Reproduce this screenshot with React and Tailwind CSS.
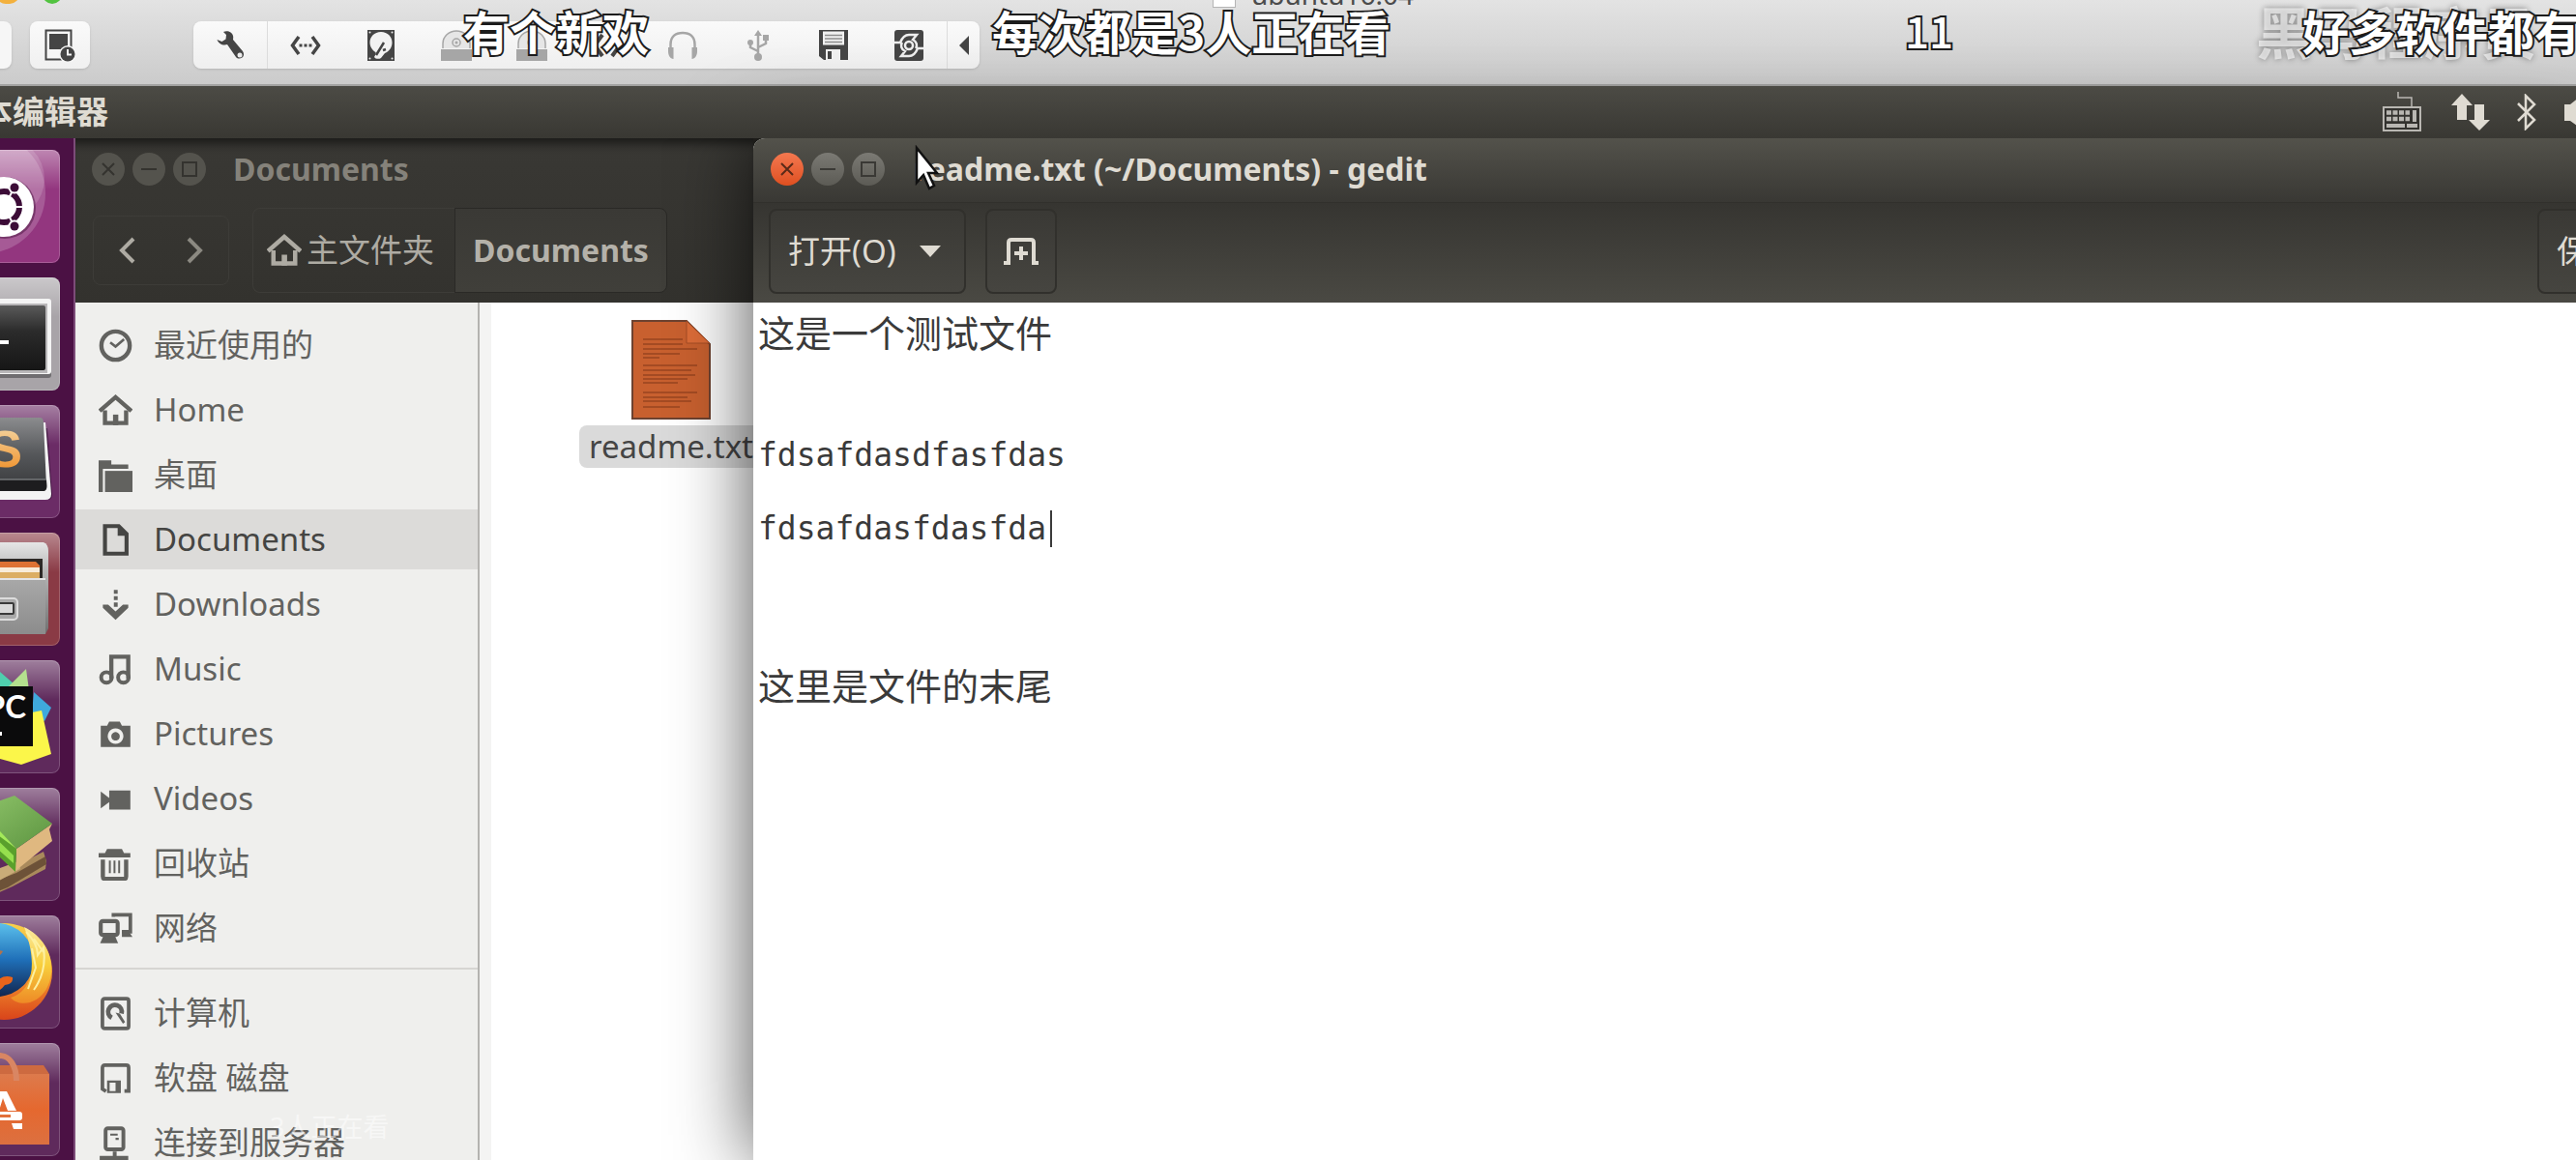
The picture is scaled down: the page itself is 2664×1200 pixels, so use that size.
import React from 'react';
import clsx from 'clsx';

const uiFont = 'font-["Noto_Sans","Noto_Sans_CJK_SC",sans-serif]';

/* ---------- VM toolbar icons (32x32) ---------- */

const vmIcons = {
  wrench: (
    <>
      <path d="M9 2c4-2 9 0 10 4 .5 2 0 3 0 4l10 12c1.500 2 1.500 5-.5 6.500s-5 1.500-6.500-.5L13 15c-4 1.500-9-.5-10.500-5l5 2 4-2.500L12 5z" />
      <circle cx="26" cy="26" r="2.500" fill="#ededed" />
    </>
  ),
  code: (
    <>
      <path d="M9 7 2.500 16 9 25M23 7l6.500 9L23 25" fill="none" stroke="currentColor" strokeWidth="3.500" />
      <path d="M9.500 14.500h3v3h-3zM14.500 14.500h3v3h-3zM19.500 14.500h3v3h-3z" />
    </>
  ),
  disk: (
    <>
      <path d="M2 0h28v32H2z" />
      <path d="M16 2c7 0 11.500 5 11.500 11 0 5-3 9-7.500 11l-4 5c-2 1.500-6 1-7-1 1-2 2-3 1.500-5C7 21 4.500 17 4.500 13 4.500 7 9 2 16 2z" fill="#f2f2f2" />
      <path d="m11 26 8-13M18 21l3-1" stroke="currentColor" strokeWidth="2.500" fill="none" />
      <circle cx="4.500" cy="29.500" r="1" fill="#eee" />
      <circle cx="27.500" cy="29.500" r="1" fill="#eee" />
      <circle cx="4.500" cy="2.500" r="1" fill="#eee" />
      <circle cx="27.500" cy="2.500" r="1" fill="#eee" />
    </>
  ),
  cd: (
    <>
      <path d="M2 19V14a14 13 0 0 1 28 0v5" fill="#e6e6e6" stroke="currentColor" strokeWidth="1.500" />
      <circle cx="16" cy="13" r="4" fill="none" stroke="currentColor" strokeWidth="1.500" />
      <circle cx="16" cy="13" r="1.500" />
      <path d="M0 20h32v12H0z" />
    </>
  ),
  network: (
    <>
      <path d="M11 5 3 16l8 11M21 5l8 11-8 11" fill="none" stroke="currentColor" strokeWidth="4" />
      <path d="M14 15h4v3h-4z" />
    </>
  ),
  headphones: (
    <>
      <path d="M3.500 22v-7c0-8 5-12 12.500-12s12.500 4 12.500 12v7" fill="none" stroke="currentColor" strokeWidth="2.500" />
      <path d="M1 18h5.500v12C3 30 1 26 1 22zM31 18h-5.500v12C29 30 31 26 31 22z" />
    </>
  ),
  usb: (
    <>
      <path d="M16 4v24M16 22l-8-4v-5M16 18l8-4V9" fill="none" stroke="currentColor" strokeWidth="2.500" />
      <path d="m16 0 4 6h-8z" />
      <circle cx="16" cy="28" r="4" />
      <circle cx="8" cy="13" r="3" />
      <path d="M21 5h6v6h-6z" />
    </>
  ),
  floppy: (
    <>
      <path d="M1 0h30v31H6l-5-4z" />
      <path d="M5 1.500h22v14H5z" fill="#f0f0f0" />
      <path d="M7 5.500h18M7 9h18M7 12.500h18" stroke="#8c8c8c" strokeWidth="1.500" />
      <path d="M8 20h15v11H8z" fill="#f0f0f0" />
      <path d="M10 22h4v8h-4z" />
    </>
  ),
  sync: (
    <>
      <rect x="1" y="0" width="30" height="32" rx="3" />
      <path d="M1 13h6c2-5 5-8 9-8h8l-4 5c4 2 5 6 3 9M31 19h-6c-2 5-5 8-9 8H8l4-5c-4-2-5-6-3-9" fill="none" stroke="#eee" strokeWidth="2.500" />
      <circle cx="16" cy="16" r="4" fill="none" stroke="#eee" strokeWidth="2.500" />
    </>
  ),
};

const vmButtons = [
  { id: 'code', label: 'Code' },
  { id: 'disk', label: 'Hard disk' },
  { id: 'cd', label: 'CD 1', dim: true },
  { id: 'cd', label: 'CD 2', dim: true },
  { id: 'network', label: 'Network' },
  { id: 'headphones', label: 'Sound', dim: true },
  { id: 'usb', label: 'USB', dim: true },
  { id: 'floppy', label: 'Floppy' },
  { id: 'sync', label: 'Sync' },
];

function VmIcon({ id, dim }) {
  return (
    <svg viewBox="0 0 32 32" className={clsx('h-8 w-8', dim ? 'text-[#a6a6a6]' : 'text-[#454545]')} fill="currentColor">
      {vmIcons[id]}
    </svg>
  );
}

function VmToolbar() {
  return (
    <header className="h-[89px] shrink-0 border-b-2 border-[#a3a3a2] bg-linear-to-b from-[#e3e3e3] to-[#cbcbcb]">
      {/* Title row, mostly above the visible area */}
      <div className="flex h-2 items-end overflow-hidden">
        <div className="-ml-1 flex w-17 shrink-0 gap-6 pb-1">
          <span className="h-5 w-6 shrink-0 rounded-full bg-[#f3b13e]" />
          <span className="h-5 w-5 shrink-0 rounded-full bg-[#52c340]" />
        </div>
        <div className="flex flex-1 items-end justify-center gap-4 pr-3">
          <span className="h-8 w-6 border border-[#b5b5b5] bg-white" />
          <span className="text-[28px] leading-7 text-[#4c4c4c]">ubuntu16.04</span>
        </div>
      </div>

      <div className="-ml-[50px] mt-[14px] flex h-[49px]">
        <button type="button" aria-label="Pause" className="w-[62px] rounded-lg bg-[#f6f6f6] shadow-sm" />
        <button type="button" aria-label="Snapshot" className="ml-[19px] flex w-[62px] items-center justify-center rounded-lg bg-linear-to-b from-[#fafafa] to-[#f0f0f0] shadow-sm">
          <svg viewBox="0 0 32 34" className="h-[34px] w-8" fill="#454545">
            <path d="M1.500 1.500h26v30h-26z" fill="#f5f5f5" stroke="#454545" strokeWidth="2" />
            <path d="M5 5h19v16H5z" />
            <circle cx="24" cy="26" r="9" fill="#f5f5f5" />
            <circle cx="24" cy="26" r="7.500" />
            <path d="M24 21v5.500h4" fill="none" stroke="#f5f5f5" strokeWidth="2" />
          </svg>
        </button>
        <div className="ml-[107px] flex rounded-lg bg-linear-to-b from-[#fafafa] to-[#efefef] shadow-sm">
          <button type="button" aria-label="Settings" className="flex w-[77px] items-center justify-center border-r border-[#dcdcdc]">
            <VmIcon id="wrench" />
          </button>
          {vmButtons.map((b) => (
            <button key={b.label} type="button" aria-label={b.label} className="flex w-[78px] items-center justify-center">
              <VmIcon id={b.id} dim={b.dim} />
            </button>
          ))}
          <button type="button" aria-label="Collapse" className="flex w-[34px] items-center justify-center border-l border-[#dcdcdc]">
            <svg viewBox="0 0 10 20" className="h-5 w-[10px]" fill="#454545">
              <path d="M10 0v20L0 10z" />
            </svg>
          </button>
        </div>
      </div>
    </header>
  );
}

/* ---------- Ubuntu top panel ---------- */

function TopPanel() {
  return (
    <div className="relative z-20 flex h-[54px] shrink-0 items-center justify-between bg-linear-to-b from-[#4c4b45] to-[#393833]">
      <div className="flex w-28 justify-end overflow-hidden">
        <span className="shrink-0 text-[33px] font-bold leading-[54px] text-[#dfdbd2]">文本编辑器</span>
      </div>
      <div className="-mr-5 flex items-center text-[#dfdbd2]">
        <svg viewBox="0 0 42 42" className="mr-[30px] h-[42px] w-[42px] text-[#b9b7b2]" fill="none" stroke="currentColor">
          <path d="M17 0v6h14v9" strokeWidth="1.500" />
          <path d="M2 16h38v24H2z" strokeWidth="2" fill="#33322e" />
          <path d="M5 21.500h24M5 28h24" strokeWidth="4.500" strokeDasharray="5 1.500" />
          <path d="M34 19v12" strokeWidth="4" />
          <path d="M5 35h19M26 35h11" strokeWidth="4" />
        </svg>
        <svg viewBox="0 0 40 38" className="mr-7 h-[38px] w-10" fill="currentColor">
          <path d="M11 0 22 12h-6v15H6V12H0zM29 38 18 27h6V11h10v16h6z" />
        </svg>
        <svg viewBox="0 0 20 38" className="mr-[29px] h-[38px] w-5" fill="none" stroke="currentColor" strokeWidth="2.500">
          <path d="M1 10l17 17-9 9V2l9 9L1 28" />
        </svg>
        <svg viewBox="0 0 32 40" className="h-10 w-8" fill="currentColor">
          <path d="M0 12h6L20 1v38L6 29H0z" />
        </svg>
      </div>
    </div>
  );
}

/* ---------- Launcher tiles (117x117) ---------- */

const launcherTiles = [
  {
    id: 'dash',
    bg: '#93367f',
    art: (
      <>
        <circle cx="40" cy="45" r="62" fill="#fff" opacity=".18" />
        <circle cx="59" cy="30" r="42" fill="#fff" opacity=".15" />
        <circle cx="60" cy="60" r="32" fill="#4a1440" opacity=".5" />
        <circle cx="59" cy="59" r="31" fill="#fff" />
        <circle cx="59" cy="59" r="16" fill="none" stroke="#3c0c37" strokeWidth="6" />
        <path d="M59 59 71 37M59 59l12 22M59 59h24" stroke="#fff" strokeWidth="2" />
        <circle cx="59" cy="59" r="12" fill="#fff" />
        <circle cx="70" cy="39" r="6.500" fill="#fff" />
        <circle cx="70" cy="79" r="6.500" fill="#fff" />
        <circle cx="70" cy="39" r="4.500" fill="#3c0c37" />
        <circle cx="70" cy="79" r="4.500" fill="#3c0c37" />
      </>
    ),
  },
  {
    id: 'terminal',
    bg: '#a8a4a8',
    art: (
      <>
        <rect x="6" y="24" width="102" height="80" rx="3" fill="#6f6d70" />
        <rect x="6" y="22" width="102" height="78" rx="3" fill="#f4f4f4" />
        <rect x="10" y="27" width="94" height="72" fill="#b9b7b9" />
        <rect x="12" y="29" width="90" height="67" rx="2" fill="url(#dark)" />
        <path d="M50 67h14" stroke="#fff" strokeWidth="4" />
      </>
    ),
  },
  {
    id: 'sublime',
    bg: '#6b2c66',
    art: (
      <>
        <path d="M12 24h92l5 69q0 5-5 5H10z" fill="#2f1030" opacity=".6" />
        <path d="M12 18h90l6 74q0 6-6 6H10z" fill="#f3f3f3" />
        <path d="M12 13h84q4 0 4 5l3 66q0 5-4 5H8z" fill="url(#slate)" />
        <path d="M8 77h95l.5 7q0 5-4 5H8z" fill="#1d1d1f" />
        <path d="M8 77h95" stroke="#75777a" strokeWidth="1.500" />
        <text x="78" y="64" textAnchor="end" fontSize="54" fontWeight="700" fill="url(#orange)" className='font-["Liberation_Sans",sans-serif]'>S</text>
      </>
    ),
  },
  {
    id: 'files',
    bg: '#8a3a45',
    art: (
      <>
        <path d="M8 16q0-6 6-6h86q5 2 5 9v80l-3 6H8z" fill="url(#silver)" />
        <path d="M8 27h91v20H8z" fill="#2e2926" />
        <path d="M8 30h84l4 4v13H8z" fill="#dd7233" />
        <path d="M8 36h88v11H8z" fill="#f8ecd8" />
        <path d="M8 41h88v7H8z" fill="#dcae62" />
        <path d="M6 49q0-2 2-2h94v58H6z" fill="url(#drawer)" />
        <path d="M6 48h96" stroke="#e4e4e4" strokeWidth="2" />
        <rect x="40" y="68" width="33" height="22" rx="4" fill="#a8a8a8" stroke="#dcdcdc" strokeWidth="2" />
        <rect x="44" y="73" width="25" height="11" rx="1" fill="#d9d9d9" stroke="#3a3a3a" strokeWidth="2" />
      </>
    ),
  },
  {
    id: 'pycharm',
    bg: '#5f2a5c',
    art: (
      <>
        <path d="m16 45 24-40 15 7 15 13-4 8z" fill="#4fcfae" />
        <path d="m64 27 18-18 3 22H62z" fill="#b4e08e" />
        <path d="m90 33 18 16-7 14-13-8z" fill="#3fa9dc" />
        <path d="M14 86 88 54l10-2 10 45-31 11-22-6z" fill="#fbf64a" />
        <path d="M24 27h65v62H24z" fill="#0b0b0c" />
        <text x="82" y="60" textAnchor="end" fontSize="33" fontWeight="700" fill="#fff" className='font-["Lato",sans-serif]'>PC</text>
        <path d="M32 76h25" stroke="#fff" strokeWidth="4" />
      </>
    ),
  },
  {
    id: 'books',
    bg: '#5f2a5c',
    art: (
      <>
        <path d="M20 96 72 80l28-14 3 10-1 8-34 18-30 13z" fill="#a98a5c" />
        <path d="M30 104 72 88l30-17 1 8-40 24-30 12z" fill="#6d5238" />
        <path d="m30 92 44-16 2 8-44 24z" fill="#c9ac78" />
        <path d="m72 63 37-26-3 6 3 12-38 31z" fill="#dfb880" />
        <path d="M30 22 70 8l39 29-37 26z" fill="url(#cover)" />
        <path d="m30 22 25 23 17 18-2 10-40-30z" fill="#a4ea5a" />
        <path d="m30 32 42 31-1 24-16-15-25-22z" fill="#5aa02c" />
        <path d="m40 42 29 28v8L40 52z" fill="#96e04e" />
      </>
    ),
  },
  {
    id: 'firefox',
    bg: '#5f2a5c',
    art: (
      <>
        <circle cx="59" cy="58" r="50" fill="url(#flame)" />
        <circle cx="52" cy="46" r="38" fill="url(#globe)" />
        <path d="M80 12c20 10 30 28 28 48-2 16-10 26-22 30-8 2-16 0-20-5 20-6 30-30 14-73z" fill="url(#tail)" />
        <path d="M82 17c8 8 12 16 12 24l6-8c2 14 0 30-10 44M90 24l10 14M88 34l4 20-8 22" stroke="#fdf0a0" strokeWidth="2" fill="none" />
        <path d="M20 66q24 8 34 0 6-5 14-2 1 7-8 8-6 8-16 9-16 0-24-15z" fill="#e8641b" />
        <path d="M44 40q6-6 14-3-2 5-10 8z" fill="#b0724e" />
      </>
    ),
  },
  {
    id: 'software',
    bg: '#5f2a5c',
    art: (
      <>
        <path d="M8 23h92l6 9v73H8z" fill="#cd6a40" />
        <path d="M8 32h98v73H8z" fill="url(#bag)" />
        <path d="M41 36c0-32 31-30 31 3" fill="none" stroke="#d98663" strokeWidth="6" />
        <path d="m45 70 8-20h9l10 20h-9l-5-13-4 13z" fill="#fff" />
        <rect x="38" y="71" width="40" height="9" rx="3" fill="#fff" />
        <path d="M42 75.500h24" stroke="#e2703a" strokeWidth="3" />
        <path d="M38 83h10v6H38zM67 83h11v6H69z" fill="#fff" />
      </>
    ),
  },
];

function Launcher() {
  return (
    <nav className="flex w-[78px] shrink-0 flex-col items-end gap-[15px] overflow-hidden border-r-2 border-[#7c4c78] bg-[#4b1144] pr-[14px] pt-3">
      <svg className="absolute h-0 w-0">
        <defs>
          <linearGradient id="dark" x2="0" y2="1"><stop stopColor="#5a5a5a" /><stop offset=".4" stopColor="#2b2b2b" /><stop offset="1" stopColor="#161616" /></linearGradient>
          <linearGradient id="slate" x2="0" y2="1"><stop stopColor="#8b8c8e" /><stop offset=".5" stopColor="#55575a" /><stop offset="1" stopColor="#37383a" /></linearGradient>
          <linearGradient id="silver" x2="0" y2="1"><stop stopColor="#e6e6e6" /><stop offset=".3" stopColor="#b9b9b9" /><stop offset="1" stopColor="#6f6f6f" /></linearGradient>
          <linearGradient id="drawer" x2="0" y2="1"><stop stopColor="#a9a9a9" /><stop offset="1" stopColor="#8c8c8c" /></linearGradient>
          <linearGradient id="orange" x2="0" y2="1"><stop stopColor="#f4ddb0" /><stop offset="1" stopColor="#f08a1e" /></linearGradient>
          <linearGradient id="cover" x2="1" y2="1"><stop stopColor="#8fc46a" /><stop offset="1" stopColor="#5c9440" /></linearGradient>
          <linearGradient id="flame" x2="0" y2="1"><stop stopColor="#f7d24a" /><stop offset=".6" stopColor="#f08a2c" /><stop offset="1" stopColor="#d9441a" /></linearGradient>
          <linearGradient id="tail" x2="0" y2="1"><stop stopColor="#fbe9a0" /><stop offset=".5" stopColor="#f8cf3c" /><stop offset="1" stopColor="#ee8a26" /></linearGradient>
          <linearGradient id="globe" x2="0" y2="1"><stop stopColor="#5bc0ec" /><stop offset=".5" stopColor="#1f6fb8" /><stop offset="1" stopColor="#12264f" /></linearGradient>
          <linearGradient id="bag" x2="0" y2="1"><stop stopColor="#dd7a4c" /><stop offset=".5" stopColor="#e5682f" /><stop offset="1" stopColor="#dc7040" /></linearGradient>
          <linearGradient id="gloss" x2="0" y2="1"><stop stopColor="#fff" stopOpacity=".4" /><stop offset=".35" stopColor="#fff" stopOpacity="0" /></linearGradient>
        </defs>
      </svg>
      {launcherTiles.map((tile) => (
        <button key={tile.id} type="button" aria-label={tile.id} className="shrink-0">
          <svg viewBox="0 0 117 117" className="h-[117px] w-[117px] overflow-hidden rounded-lg">
            <path d="M0 0h117v117H0z" fill={tile.bg} />
            <path d="M0 0h117v117H0z" fill="url(#gloss)" />
            {tile.art}
            <rect x=".5" y=".5" width="116" height="116" rx="8" fill="none" stroke="#fff" strokeOpacity=".2" />
          </svg>
        </button>
      ))}
    </nav>
  );
}

/* ---------- Window chrome ---------- */

function WindowControls({ active }) {
  return (
    <div className="flex gap-2">
      {['close', 'minimize', 'maximize'].map((kind) => (
        <button
          key={kind}
          type="button"
          aria-label={kind}
          className={clsx(
            'flex h-[34px] w-[34px] items-center justify-center rounded-full',
            !active && 'bg-[#54534d] text-[#34332f]',
            active && kind === 'close' && 'bg-linear-to-b from-[#f4784f] to-[#df4f1f] text-[#5a2a18]',
            active && kind !== 'close' && 'bg-linear-to-b from-[#7b7a74] to-[#5c5b55] text-[#3a3935]'
          )}
        >
          <svg viewBox="0 0 16 16" className="h-4 w-4" fill="none" stroke="currentColor" strokeWidth="2">
            {kind === 'close' && <path d="m2 2 12 12M14 2 2 14" />}
            {kind === 'minimize' && <path d="M0 8h16" />}
            {kind === 'maximize' && <path d="M1 1h14v14H1z" />}
          </svg>
        </button>
      ))}
    </div>
  );
}

/* ---------- Sidebar icons (16x16 symbolic) ---------- */

const placeIcons = {
  recent: <><circle cx="8" cy="8" r="6.700" fill="none" stroke="currentColor" strokeWidth="2" /><path d="m5.500 6.500 2.500 2 4-3.500" fill="none" stroke="currentColor" strokeWidth="1.200" /></>,
  home: <><path d="M.5 8.300 8 1.800l7.500 6.500" fill="none" stroke="currentColor" strokeWidth="2" /><path d="M3 8v6h10V8" fill="none" stroke="currentColor" strokeWidth="2" /><path d="M6.800 10h2.500v5H6.800z" /></>,
  desktop: <><path d="M0 1h6v2h8v2H2v11H0z" /><path d="M3 6h13v10H3z" /></>,
  documents: <><path d="M3 1.500h6.500l3.700 3.700v9.300H3z" fill="none" stroke="currentColor" strokeWidth="1.900" /><path d="M9 1v5h5z" /></>,
  downloads: <path d="M7.200 1h1.800v1.800H7.200zM7.200 4h1.800v1.800H7.200zM7.200 7h1.800v2H7.200zM2 8h2.500L8 11.200 11.500 8H14v1.500l-6 5.700-6-5.700z" />,
  music: <><path d="M6 12.500V2h8v10.500" fill="none" stroke="currentColor" strokeWidth="2" /><circle cx="3.700" cy="11.800" r="2.500" fill="none" stroke="currentColor" strokeWidth="1.800" /><circle cx="11.700" cy="11.800" r="2.500" fill="none" stroke="currentColor" strokeWidth="1.800" /></>,
  pictures: <path fillRule="evenodd" d="M5 2h5l1 2h4v10H1V4h3zM8 5.200a3.700 3.700 0 1 0 .01 0zM8 7a2 2 0 1 1-.01 0z" />,
  videos: <path d="M5 4h10v9H5V9.500l-4 3v-8l4 3z" />,
  trash: <><path d="M0 3h3l1-2h7l1 2h3v2H0z" /><path d="M2 6v8q0 1.200 1.200 1.200h8.600q1.200 0 1.200-1.200V6" fill="none" stroke="currentColor" strokeWidth="2" /><path d="M5.300 6.500v6M7.500 6.500v6M9.700 6.500v6" stroke="currentColor" strokeWidth=".9" /></>,
  network: <><path d="M7 2.500V1.500h8v8h-4" fill="none" stroke="currentColor" strokeWidth="1.700" /><path d="M11 9h3l2 3h-5z" /><rect x="1" y="4.500" width="8" height="6.500" rx="1" fill="none" stroke="currentColor" strokeWidth="1.900" /><path d="M2.500 11h5l1.700 4H.7z" /></>,
  computer: <><rect x="1.800" y="1" width="12.400" height="14" rx="1" fill="none" stroke="currentColor" strokeWidth="1.700" /><path d="M6.200 10A3.200 3.200 0 1 1 10.800 8" fill="none" stroke="currentColor" strokeWidth="2.200" /><path d="m8 7.500 2 .5 2.500 4-1 .8z" /></>,
  floppy: <><path d="M3.500 14.200 1.800 13V3q0-1.200 1.200-1.200h10q1.200 0 1.200 1.200v11h-2" fill="none" stroke="currentColor" strokeWidth="1.700" /><path fillRule="evenodd" d="M4 9h6.500v6H4zM5.200 10v4H8v-4z" /></>,
  server: <><rect x="3.300" y="1" width="8.400" height="10" rx="1" fill="none" stroke="currentColor" strokeWidth="1.800" /><path d="M5.500 3.500h3.500v1H5.500zM8 5.500h1.500v1H8z" /><path d="M6.700 12h1.800v2h5.500v2H.5v-2h6.200z" /></>,
};

const places = [
  { id: 'recent', label: '最近使用的' },
  { id: 'home', label: 'Home' },
  { id: 'desktop', label: '桌面' },
  { id: 'documents', label: 'Documents', active: true },
  { id: 'downloads', label: 'Downloads' },
  { id: 'music', label: 'Music' },
  { id: 'pictures', label: 'Pictures' },
  { id: 'videos', label: 'Videos' },
  { id: 'trash', label: '回收站' },
  { id: 'network', label: '网络' },
];

const devices = [
  { id: 'computer', label: '计算机' },
  { id: 'floppy', label: '软盘 磁盘' },
  { id: 'server', label: '连接到服务器' },
];

function PlaceList({ items }) {
  return (
    <ul className="flex flex-col gap-[5px]">
      {items.map((item) => (
        <li key={item.id}>
          <button
            type="button"
            className={clsx(
              'flex h-[62px] w-full items-center gap-[22px] pl-6 text-[33px]',
              item.active ? 'bg-[#dcdbd9] text-[#454543]' : 'text-[#62625f]'
            )}
          >
            <svg viewBox="0 0 16 16" className="h-[35px] w-[35px] shrink-0" fill="currentColor">
              {placeIcons[item.id]}
            </svg>
            <span className="whitespace-nowrap leading-[62px]">{item.label}</span>
          </button>
        </li>
      ))}
    </ul>
  );
}

function FilesWindow() {
  return (
    <section className="flex w-[701px] shrink-0 flex-col">
      <div className="h-[170px] shrink-0 bg-linear-to-b from-[#393834] to-[#33322e] shadow-[inset_0_12px_10px_-6px_rgba(0,0,0,0.5)]">
        <div className="flex h-16 items-center gap-7 pl-[17px]">
          <WindowControls />
          <h2 className="text-[32px] font-bold leading-[64px] text-[#85827a]">Documents</h2>
        </div>
        <div className="flex items-center pl-[18px] pt-2">
          <div className="flex h-[72px] w-[141px] items-center rounded-lg border border-[#3d3c38] text-[#aeaba3]">
            <button type="button" aria-label="Back" className="flex flex-1 justify-center pr-1">
              <svg viewBox="0 0 18 28" className="h-7 w-[18px]" fill="none" stroke="currentColor" strokeWidth="4">
                <path d="M16 2 4 14l12 12" />
              </svg>
            </button>
            <button type="button" aria-label="Forward" className="flex flex-1 justify-center">
              <svg viewBox="0 0 18 28" className="h-7 w-[18px]" fill="none" stroke="#8b8981" strokeWidth="4">
                <path d="m2 2 12 12L2 26" />
              </svg>
            </button>
          </div>
          <button type="button" className="ml-6 flex h-[88px] w-[209px] items-center gap-[5px] rounded-l-lg border border-r-0 border-[#3d3c38] pl-[14px] text-[33px] text-[#aeaba3]">
            <svg viewBox="0 0 16 16" className="h-9 w-9 shrink-0" fill="currentColor">{placeIcons.home}</svg>
            <span className="whitespace-nowrap">主文件夹</span>
          </button>
          <button type="button" className="h-[88px] w-[220px] rounded-r-lg border border-[#2a2926] bg-linear-to-b from-[#3a3935] to-[#403f3a] text-[32px] font-bold text-[#b4b1a9]">
            Documents
          </button>
        </div>
      </div>

      <div className="flex min-h-0 flex-1">
        <aside className="w-[418px] shrink-0 overflow-hidden border-r-2 border-[#b4b3b0] bg-[#efefed] pt-[13px]">
          <PlaceList items={places} />
          <hr className="mb-[14px] mt-[10px] border-t-2 border-[#d6d5d2]" />
          <PlaceList items={devices} />
        </aside>
        <div className="w-3 shrink-0 bg-[#f4f4f3]" />
        <div className="flex flex-1 justify-end bg-white pt-[18px]">
          <figure className="-mr-[10px] flex flex-col items-center">
            <svg viewBox="0 0 82 103" className="h-[103px] w-[82px]">
              <path d="M1 1h56l24 24v77H1z" fill="#c8602f" stroke="#6d4230" strokeWidth="2" />
              <path d="M57 1v23h24z" fill="#dc6c38" stroke="#a44c25" />
              <path d="M12 20h41M12 25h41M12 30h56M12 35h38M12 39h17M12 47h56M12 52h50M12 57h54M12 61h46M12 65h36M12 75h56M12 80h46M12 84h50M12 90h38" stroke="#984420" strokeWidth="1.500" />
            </svg>
            <figcaption className="mt-[6px] whitespace-nowrap rounded-lg bg-[#dadada] px-[10px] text-[33px] leading-[44px] text-[#454545]">
              readme.txt
            </figcaption>
          </figure>
        </div>
      </div>
    </section>
  );
}

/* ---------- gedit ---------- */

const headerButton = 'flex h-[88px] shrink-0 items-center rounded-lg border-2 border-[#31302c] bg-linear-to-b from-[#3a3935] to-[#464540] text-[33px] text-[#dfdbd2]';

function GeditWindow() {
  return (
    <section className="relative z-10 flex min-w-0 flex-1 flex-col overflow-hidden rounded-tl-xl bg-white shadow-[0_0_80px_rgba(0,0,0,0.7)]">
      <div className="flex h-[66px] shrink-0 items-center gap-[30px] bg-linear-to-b from-[#53524b] to-[#393834] pb-[2px] pl-[18px]">
        <WindowControls active />
        <h1 className="whitespace-nowrap text-[32px] font-bold leading-[64px] text-[#dfdbd2]">readme.txt (~/Documents) - gedit</h1>
      </div>
      <div className="flex h-[104px] shrink-0 items-center justify-between border-t border-[#31302c] bg-linear-to-b from-[#363531] to-[#4a4943] pb-1 pl-4">
        <div className="flex gap-5">
          <button type="button" className={clsx(headerButton, 'w-[204px] gap-6 pl-[18px]')}>
            <span className="whitespace-nowrap">打开(O)</span>
            <svg viewBox="0 0 22 12" className="h-3 w-[22px]" fill="currentColor">
              <path d="M0 0h22L11 12z" />
            </svg>
          </button>
          <button type="button" aria-label="New tab" className={clsx(headerButton, 'w-[74px] justify-center')}>
            <svg viewBox="0 0 36 28" className="h-7 w-9" fill="none" stroke="currentColor" strokeWidth="4">
              <path d="M0 26h5V5q0-3 3-3h20q3 0 3 3v21h5" />
              <path d="M18 9v14M11 16h14" />
            </svg>
          </button>
        </div>
        <button type="button" className={clsx(headerButton, '-mr-[110px] w-[150px] pl-[18px]')}>
          <span className="whitespace-nowrap">保存(S)</span>
        </button>
      </div>

      <div
        role="textbox"
        aria-multiline="true"
        aria-label="readme.txt"
        className='flex-1 pl-[5px] font-["DejaVu_Sans_Mono","Noto_Sans_CJK_SC",monospace] text-[33px] leading-[76px] text-[#3a3a3a]'
      >
        <p className="mb-[54px] text-[38px] leading-[66px]">这是一个测试文件</p>
        <p>fdsafdasdfasfdas</p>
        <p className="mb-[88px] flex items-center">
          fdsafdasfdasfda
          <span className="ml-1 h-[38px] w-[2px] bg-[#3a3a3a]" />
        </p>
        <p className="text-[38px]">这里是文件的末尾</p>
      </div>
    </section>
  );
}

/* ---------- Floating comments over the video ---------- */

const comments = [
  { text: '有个新欢', place: 'left-[479px]' },
  { text: '每次都是3人正在看', place: 'left-[1026px]' },
  { text: '11', place: 'left-[1970px]', small: true },
  { text: '好多软件都有', place: 'left-[2381px]' },
];

export default function App() {
  return (
    <div className={clsx('relative flex h-screen flex-col overflow-hidden bg-[#24231f]', uiFont)}>
      <VmToolbar />
      <TopPanel />
      <main className="flex min-h-0 flex-1">
        <Launcher />
        <FilesWindow />
        <GeditWindow />
      </main>

      {/* Mouse pointer */}
      <svg viewBox="0 0 26 52" className="absolute left-[946px] top-[150px] z-30 h-[52px] w-[26px]">
        <path d="M2 3v36l7-8 6 14 5-3-6-13h9z" fill="#fff" stroke="#111" strokeWidth="2.500" />
      </svg>

      <div className='pointer-events-none absolute inset-x-0 top-0 z-40 h-20 overflow-hidden whitespace-nowrap font-["Noto_Sans_CJK_SC",sans-serif]'>
        <span className="absolute left-[2333px] top-0 text-[58px] font-bold leading-[62px] text-white/60 [text-shadow:0_0_6px_rgba(0,0,0,0.4)]">
          黑马程序员
        </span>
        {comments.map((c) => (
          <span
            key={c.text}
            className={clsx(
              'absolute top-0 leading-[62px] text-white [-webkit-text-stroke:4px_#1c1c1c] [paint-order:stroke]',
              c.small ? 'text-[44px] font-medium' : 'text-[48px] font-bold',
              c.place
            )}
          >
            {c.text}
          </span>
        ))}
      </div>
      <span className="pointer-events-none absolute left-[279px] top-[1148px] z-40 text-[27px] leading-9 text-white/50">3人正在看</span>
    </div>
  );
}
